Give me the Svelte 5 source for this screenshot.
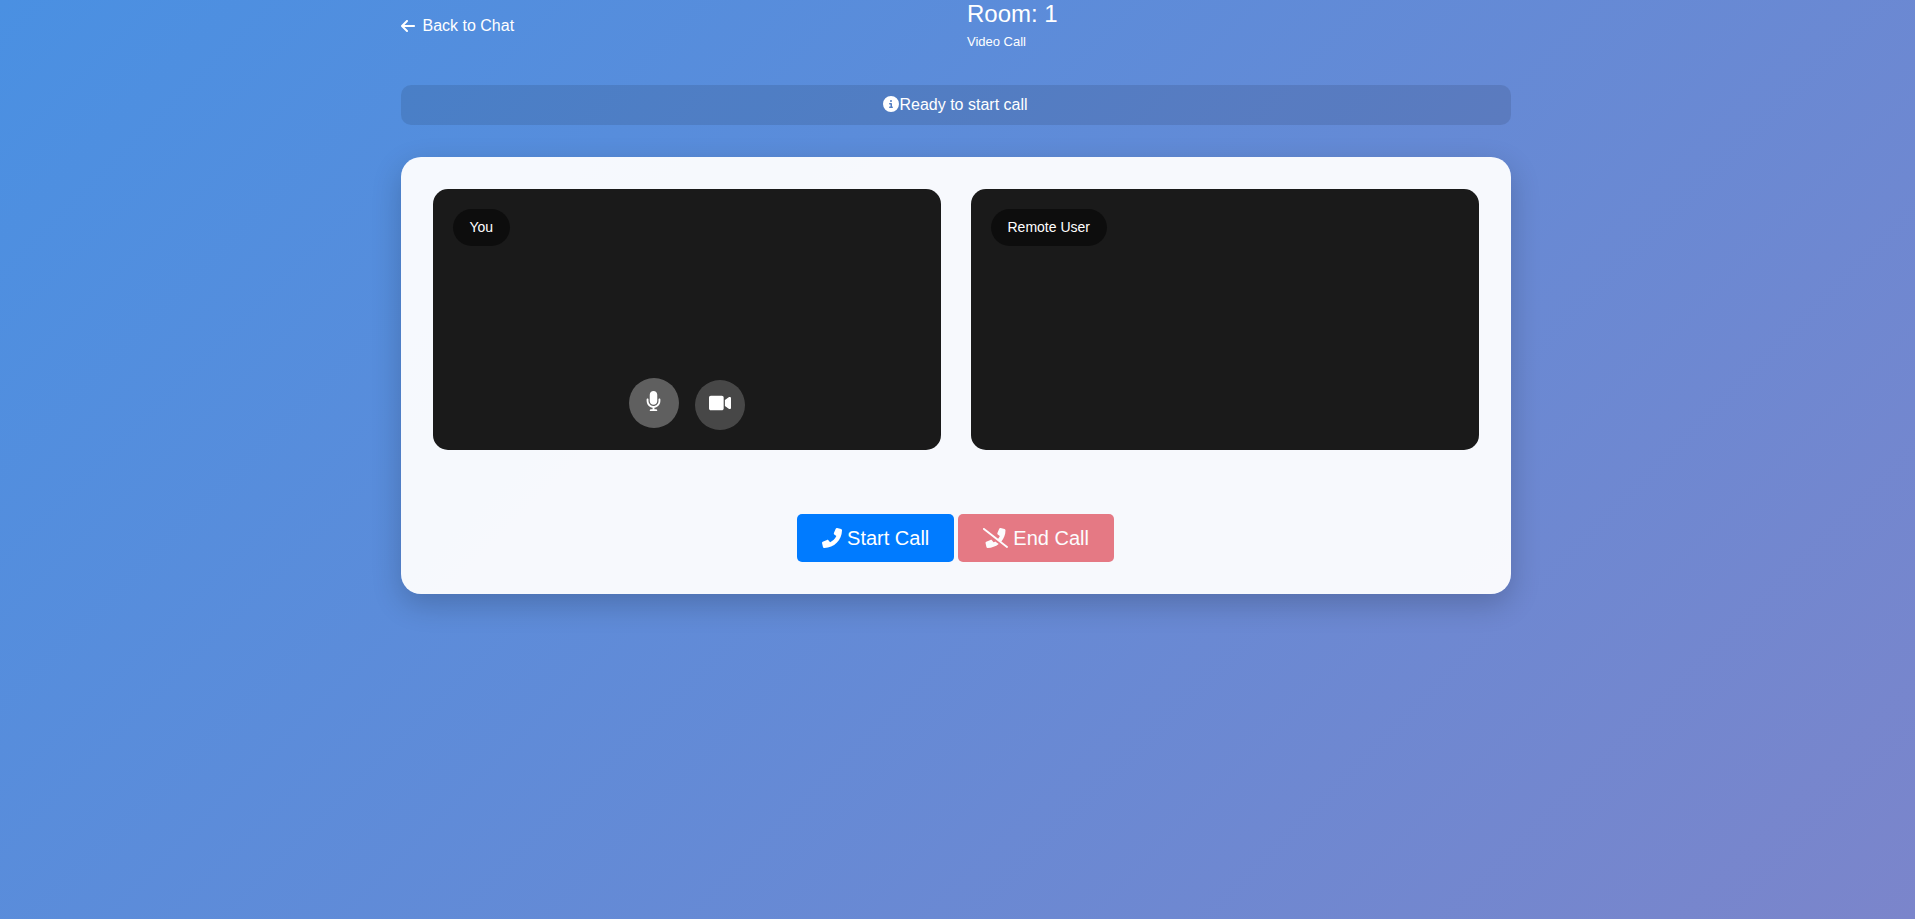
<script>
  let room = $state('1');
  let status = $state('Ready to start call');
</script>

<div class="page">
  <div class="container">
    <header>
      <a class="back" href="#chat">
        <svg class="arrow" viewBox="0 0 448 512" aria-hidden="true"><path d="M9.400 233.400c-12.500 12.500-12.500 32.800 0 45.300l160 160c12.500 12.500 32.800 12.500 45.300 0s12.500-32.800 0-45.300L109.200 288 416 288c17.700 0 32-14.300 32-32s-14.300-32-32-32l-306.700 0L214.600 118.600c12.500-12.500 12.500-32.800 0-45.300s-32.800-12.500-45.300 0l-160 160z" /></svg>
        <span>Back to Chat</span>
      </a>
      <div class="title">
        <h1>Room: {room}</h1>
        <small>Video Call</small>
      </div>
      <div></div>
    </header>

    <div class="status" role="status">
      <svg viewBox="0 0 512 512" aria-hidden="true"><path d="M256 512A256 256 0 1 0 256 0a256 256 0 1 0 0 512zM216 336l24 0 0-64-24 0c-13.300 0-24-10.700-24-24s10.700-24 24-24l48 0c13.300 0 24 10.700 24 24l0 88 8 0c13.300 0 24 10.700 24 24s-10.700 24-24 24l-80 0c-13.300 0-24-10.700-24-24s10.700-24 24-24zm40-208a32 32 0 1 1 0 64 32 32 0 1 1 0-64z" /></svg>
      <span>{status}</span>
    </div>

    <main class="card">
      <div class="videos">
        <section class="video">
          <span class="label">You</span>
          <div class="controls">
            <button class="round raised" type="button" aria-label="Microphone">
              <svg class="mic" viewBox="0 0 384 512" aria-hidden="true"><path d="M192 352c53.030 0 96-42.970 96-96v-160c0-53.030-42.970-96-96-96s-96 42.970-96 96v160C96 309 138.100 352 192 352zM344 192C330.700 192 320 202.700 320 216V256c0 73.330-61.970 132.400-136.300 127.700c-66.080-4.169-119.700-66.590-119.700-132.800L64 216C64 202.700 53.250 192 40 192S16 202.700 16 216v32.150c0 89.660 63.970 169.600 152 181.700V464H128c-18.190 0-32.840 15.180-31.960 33.570C96.430 505.800 103.800 512 112 512h160c8.222 0 15.570-6.216 15.960-14.430C288.800 479.200 274.200 464 256 464h-40v-33.770C301.700 418.500 368 344.900 368 256V216C368 202.700 357.300 192 344 192z" /></svg>
            </button>
            <button class="round" type="button" aria-label="Camera">
              <svg class="cam" viewBox="0 0 576 512" aria-hidden="true"><path d="M336.200 64H47.800C21.400 64 0 85.400 0 111.800v288.400C0 426.600 21.400 448 47.800 448h288.400c26.400 0 47.800-21.400 47.800-47.800V111.800c0-26.400-21.400-47.800-47.800-47.800zm189.400 37.700L416 177.300v157.400l109.600 75.500c21.200 14.600 50.400-.3 50.400-25.800V127.500c0-25.400-29.100-40.400-50.400-25.800z" /></svg>
            </button>
          </div>
        </section>
        <section class="video">
          <span class="label">Remote User</span>
        </section>
      </div>

      <div class="actions">
        <button class="btn start" type="button">
          <svg class="phone" viewBox="0 0 512 512" aria-hidden="true"><path d="M18.920 351.200l108.500-46.520c12.780-5.531 27.770-1.801 36.450 8.980l44.090 53.820c69.250-34 125.500-90.310 159.600-159.500l-53.810-44.040c-10.750-8.781-14.410-23.690-8.974-36.470l46.510-108.500c6.094-13.910 21.100-21.520 35.790-18.110l100.800 23.250c14.250 3.250 24.220 15.800 24.220 30.460c0 252.300-205.200 457.500-457.500 457.500c-14.670 0-27.180-9.968-30.450-24.220l-23.250-100.800C-2.571 372.400 5.018 357.200 18.920 351.200z" /></svg>
          <span>Start Call</span>
        </button>
        <button class="btn end" type="button" disabled>
          <svg class="slash" viewBox="0 0 640 512" aria-hidden="true"><path d="M271.100 367.500L227.900 313.700c-8.688-10.780-23.690-14.510-36.470-8.974l-108.500 46.510c-13.910 6-21.490 21.190-18.110 35.790l23.250 100.800C91.320 502 103.800 512 118.500 512c107.400 0 206.100-37.460 284.200-99.650l-88.750-69.560C300.600 351.900 286.600 360.300 271.100 367.500zM630.800 469.100l-159.600-125.100c65.030-78.970 104.700-179.500 104.700-289.500c0-14.660-9.969-27.200-24.220-30.450L451 .8125c-14.690-3.406-29.730 4.213-35.820 18.120l-46.520 108.500c-5.438 12.780-1.771 27.670 8.979 36.450l53.820 44.080C419.200 232.100 403.900 256.200 386.200 277.400L38.810 5.111C34.410 1.673 29.190 0 24.030 0C16.910 0 9.839 3.158 5.121 9.189c-8.188 10.440-6.370 25.530 4.068 33.700l591.100 463.100c10.500 8.203 25.570 6.328 33.690-4.078C643.100 492.400 641.200 477.300 630.800 469.100z" /></svg>
          <span>End Call</span>
        </button>
      </div>
    </main>
  </div>
</div>

<style>
  :global(body) {
    margin: 0;
  }

  .page,
  .page * {
    box-sizing: border-box;
  }

  .page {
    min-height: 100vh;
    background: linear-gradient(135deg, #4a90e2, #7b85cb);
    color: #fff;
    font: 16px/24px "Liberation Sans", Arial, sans-serif;
    overflow: hidden;
  }

  .container {
    width: 100%;
    max-width: 1140px;
    margin: 0 auto;
    padding: 0 17px 0 13px;
  }

  svg {
    display: block;
    flex: none;
    fill: currentColor;
  }

  header {
    display: flex;
    justify-content: space-between;
    align-items: center;
    height: 51px;
    margin-bottom: 34px;
  }

  .back {
    display: flex;
    align-items: center;
    gap: 8px;
    color: inherit;
    text-decoration: none;
  }

  .arrow {
    width: 14px;
    height: 16px;
  }

  h1 {
    margin: 0 0 3px;
    font-size: 24px;
    line-height: 30px;
    font-weight: 400;
  }

  small {
    display: block;
    font-size: 13px;
    line-height: 20px;
  }

  .status {
    display: flex;
    justify-content: center;
    padding: 8px;
    margin-bottom: 32px;
    border-radius: 10px;
    background: rgba(0, 0, 0, 0.1);
  }

  .status svg {
    width: 16px;
    height: 16px;
    margin-top: 3px;
  }

  .card {
    padding: 32px;
    border-radius: 20px;
    background: rgba(255, 255, 255, 0.95);
    box-shadow: 0 10px 30px rgba(0, 0, 0, 0.2);
  }

  .videos {
    display: grid;
    grid-template-columns: 1fr 1fr;
    gap: 30px;
    margin-bottom: 64px;
  }

  .video {
    display: flex;
    flex-direction: column;
    justify-content: space-between;
    align-items: flex-start;
    min-height: 261px;
    padding: 20px;
    border-radius: 15px;
    background: #1a1a1a;
  }

  .label {
    padding: 8px 17px;
    border-radius: 20px;
    background: rgba(0, 0, 0, 0.5);
    font-size: 14px;
    line-height: 21px;
  }

  .controls {
    display: flex;
    align-self: center;
    align-items: flex-end;
    gap: 16px;
  }

  .round {
    display: flex;
    justify-content: center;
    width: 50px;
    height: 50px;
    padding: 13px 0 0;
    border: 0;
    border-radius: 50%;
    background: rgba(255, 255, 255, 0.2);
    color: #fff;
  }

  .raised {
    margin-bottom: 2px;
    background: rgba(255, 255, 255, 0.3);
  }

  .mic {
    width: 15px;
    height: 20px;
  }

  .cam {
    width: 22px;
    height: 20px;
  }

  .actions {
    display: flex;
    justify-content: center;
    gap: 4px;
  }

  .btn {
    display: flex;
    align-items: center;
    gap: 5px;
    height: 48px;
    padding: 0 25px;
    border: 0;
    border-radius: 5px;
    color: #fff;
    font: 20px/30px "Liberation Sans", Arial, sans-serif;
  }

  .start {
    background: #007bff;
  }

  .end {
    background: #dc3545;
    opacity: 0.65;
  }

  .phone {
    width: 20px;
    height: 20px;
  }

  .slash {
    width: 25px;
    height: 20px;
  }
</style>
